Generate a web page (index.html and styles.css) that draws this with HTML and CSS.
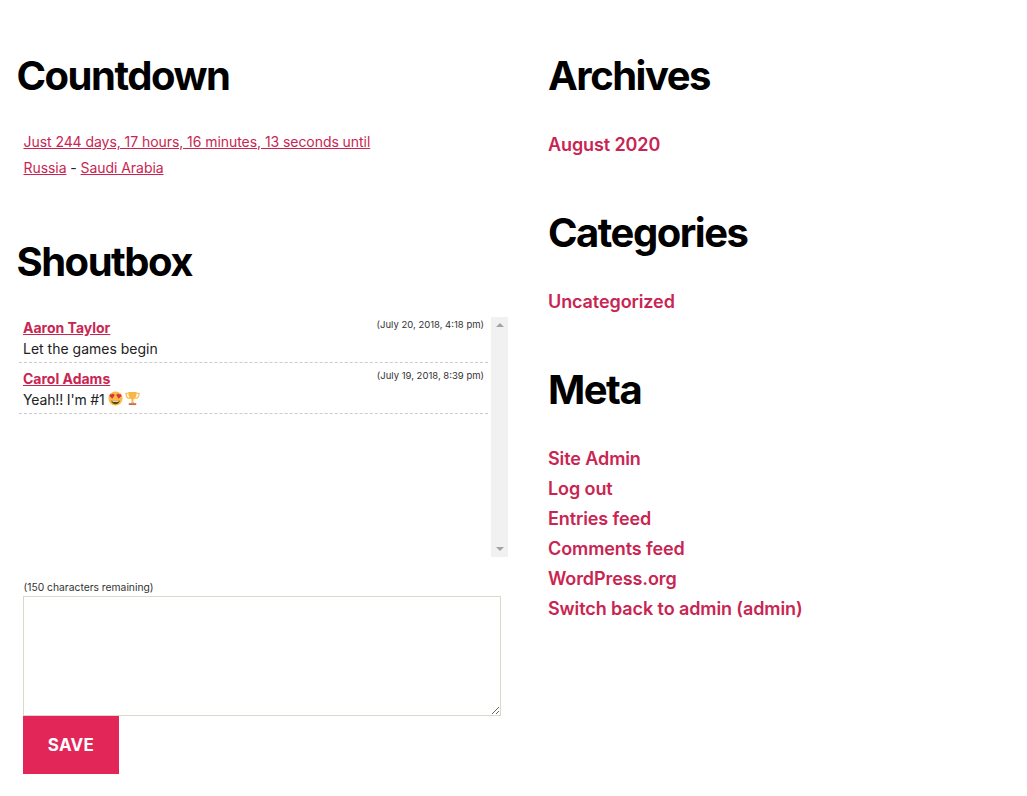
FILE: index.html
```html
<!DOCTYPE html>
<html lang="en">
<head>
<meta charset="utf-8">
<title>Widgets</title>
<link rel="stylesheet" href="styles.css">
</head>
<body>
<main class="widgets">
  <div class="col col-left">
    <section class="widget countdown-widget">
      <h2 class="widget-title">Countdown</h2>
      <div class="countdown">
        <div class="countdown-line"><a href="#">Just 244 days, 17 hours, 16 minutes, 13 seconds until</a></div>
        <div class="countdown-line"><a href="#">Russia</a> - <a href="#">Saudi Arabia</a></div>
      </div>
    </section>
    <section class="widget shoutbox-widget">
      <h2 class="widget-title">Shoutbox</h2>
      <div class="shout-frame">
        <div class="shout-list">
          <div class="shout">
            <div class="shout-head"><a class="shout-author" href="#">Aaron Taylor</a><span class="shout-date">(July 20, 2018, 4:18 pm)</span></div>
            <div class="shout-text">Let the games begin</div>
          </div>
          <div class="shout">
            <div class="shout-head"><a class="shout-author" href="#">Carol Adams</a><span class="shout-date">(July 19, 2018, 8:39 pm)</span></div>
            <div class="shout-text shout-text-tight">Yeah!! I'm #1
              <svg class="emoji" viewBox="0 0 16 16" aria-hidden="true"><circle cx="8" cy="8" r="7.5" fill="#f8bb45"/><path d="M3.400 10c1.500.5 7.700.5 9.200 0-.4 2.600-2.300 4-4.600 4s-4.200-1.400-4.600-4z" fill="#664500"/><path d="M4.500 10.500h7l-.5 1h-6z" fill="#fff"/><path d="M4.600 8.200 1.900 5.600C.8 4.300 2.600 2.500 4 3.800c.8-1.700 3.300-.9 2.900 1z" fill="#e0303f"/><path d="M11.400 8.200l2.700-2.600c1.100-1.300-.7-3.100-2.100-1.800-.8-1.700-3.300-.9-2.900 1z" fill="#e0303f"/></svg><svg class="emoji emoji-next" viewBox="0 0 16 16" aria-hidden="true"><path d="M3.500 2.500H1C1 6 2.500 8 5 8M12.500 2.500H15C15 6 13.500 8 11 8" fill="none" stroke="#f6bf55" stroke-width="1.300"/><path d="M3.500 1h9c0 5-1.500 7.500-3.500 8v2.500H7V9C5 8.500 3.500 6 3.500 1z" fill="#f8b645"/><path d="M6.500 11.500h3l.5 1.500H6z" fill="#f4c070"/><path d="M4 13h8v2H4z" fill="#c2704f"/></svg>
            </div>
          </div>
        </div>
        <div class="scrollbar" aria-hidden="true">
          <span class="arrow arrow-up"></span>
          <span class="arrow arrow-down"></span>
        </div>
      </div>
      <form class="shout-form">
        <div class="remaining">(150 characters remaining)</div>
        <textarea class="shout-input" aria-label="Message"></textarea>
        <button class="save" type="button">SAVE</button>
      </form>
    </section>
  </div>
  <div class="col col-right">
    <section class="widget">
      <h2 class="widget-title">Archives</h2>
      <ul class="links"><li><a href="#">August 2020</a></li></ul>
    </section>
    <section class="widget">
      <h2 class="widget-title">Categories</h2>
      <ul class="links"><li><a href="#">Uncategorized</a></li></ul>
    </section>
    <section class="widget">
      <h2 class="widget-title">Meta</h2>
      <ul class="links">
        <li><a href="#">Site Admin</a></li>
        <li><a href="#">Log out</a></li>
        <li><a href="#">Entries feed</a></li>
        <li><a href="#">Comments feed</a></li>
        <li><a href="#">WordPress.org</a></li>
        <li><a href="#">Switch back to admin (admin)</a></li>
      </ul>
    </section>
  </div>
</main>
</body>
</html>
```

FILE: styles.css
```css
* { box-sizing: border-box; }
html, body { margin: 0; padding: 0; background: #fff; }
body {
  font-family: Inter, "Liberation Sans", sans-serif;
  color: #000;
}
a { color: #c92552; }
.widgets {
  display: grid;
  grid-template-columns: 531px 1fr;
  padding: 52px 0 22px 16.500px;
}
.widget-title {
  margin: 0;
  font-size: 40px;
  line-height: 48px;
  font-weight: 700;
  letter-spacing: -1.500px;
}
.countdown {
  margin-top: 29px;
  padding-left: 7px;
  font-size: 14px;
  line-height: 26px;
  letter-spacing: -0.060px;
  color: #222;
}
.shoutbox-widget { margin-top: 57px; }
.shout-frame {
  display: flex;
  margin-top: 31px;
  margin-left: 2px;
  width: 489.500px;
  height: 240px;
}
.shout-list { flex: 1; margin-right: 3px; }
.shout {
  height: 46px;
  padding: 1px 4px 0 4.500px;
  border-bottom: 1px dashed #ccc;
}
.shout + .shout { height: 51px; padding-top: 6px; }
.shout-head {
  display: flex;
  justify-content: space-between;
  align-items: flex-start;
  height: 20px;
}
.shout-author {
  font-size: 14px;
  line-height: 20px;
  font-weight: 700;
}
.shout-date {
  font-size: 9.500px;
  line-height: 14px;
  color: #333;
}
.shout-text {
  font-size: 14px;
  line-height: 21px;
  color: #222;
}
.shout-text-tight { letter-spacing: -0.150px; }
.emoji {
  width: 15px;
  height: 15px;
  margin-left: -0.500px;
  vertical-align: -1px;
}
.emoji-next { margin-left: 2px; }
.scrollbar {
  flex: none;
  width: 17px;
  display: flex;
  flex-direction: column;
  justify-content: space-between;
  align-items: center;
  padding: 6px 0;
  background: #f1f1f1;
}
.arrow {
  width: 0;
  height: 0;
  border-left: 4px solid transparent;
  border-right: 4px solid transparent;
}
.arrow-up { border-bottom: 4px solid #a3a3a3; }
.arrow-down { border-top: 4px solid #a3a3a3; }
.shout-form { margin-left: 6.500px; margin-top: 22px; }
.remaining {
  height: 17px;
  padding-left: 0.500px;
  font-size: 10.300px;
  line-height: 16px;
  color: #333;
}
.shout-input {
  display: block;
  width: 478px;
  height: 120px;
  padding: 0;
  margin: 0;
  background: #fff;
  border: 1px solid #ddd6cb;
  border-radius: 0;
  outline: none;
}
.save {
  display: block;
  width: 96px;
  height: 58px;
  padding: 0;
  border: 0;
  background: #e22658;
  color: #fff;
  font-family: inherit;
  font-size: 17px;
  font-weight: 700;
  letter-spacing: 0.300px;
}
.col-right { margin-left: 0.500px; }
.col-right .widget + .widget { margin-top: 49px; }
.links {
  list-style: none;
  margin: 30px 0 0;
  padding: 0;
}
.links li {
  font-size: 18px;
  line-height: 30px;
  font-weight: 600;
  letter-spacing: -0.100px;
}
.links a { text-decoration: none; }
```
